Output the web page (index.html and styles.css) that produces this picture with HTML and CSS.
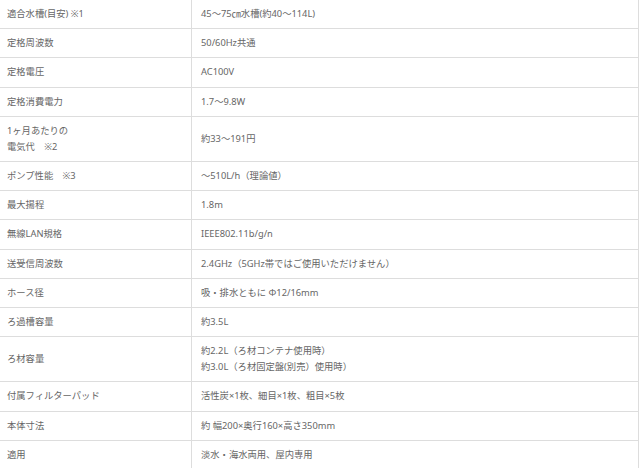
FILE: index.html
```html
<!DOCTYPE html>
<html lang="ja">
<head>
<meta charset="utf-8">
<link rel="stylesheet" href="styles.css">
</head>
<body>
<table class="spec">
<tbody>
<tr><th>適合水槽(目安) ※1</th><td>45～75㎝水槽(約40～114L)</td></tr>
<tr><th>定格周波数</th><td>50/60Hz共通</td></tr>
<tr><th>定格電圧</th><td>AC100V</td></tr>
<tr><th>定格消費電力</th><td>1.7～9.8W</td></tr>
<tr><th>1ヶ月あたりの<br>電気代　※2</th><td>約33～191円</td></tr>
<tr><th>ポンプ性能　※3</th><td>～510L/h（理論値）</td></tr>
<tr><th>最大揚程</th><td>1.8m</td></tr>
<tr><th>無線LAN規格</th><td>IEEE802.11b/g/n</td></tr>
<tr><th>送受信周波数</th><td>2.4GHz（5GHz帯ではご使用いただけません）</td></tr>
<tr><th>ホース径</th><td>吸・排水ともに Φ12/16mm</td></tr>
<tr><th>ろ過槽容量</th><td>約3.5L</td></tr>
<tr><th>ろ材容量</th><td>約2.2L（ろ材コンテナ使用時）<br>約3.0L（ろ材固定盤(別売）使用時）</td></tr>
<tr><th>付属フィルターパッド</th><td>活性炭×1枚、細目×1枚、粗目×5枚</td></tr>
<tr><th>本体寸法</th><td>約 幅200×奥行160×高さ350mm</td></tr>
<tr><th>適用</th><td>淡水・海水両用、屋内専用</td></tr>
</tbody>
</table>
</body>
</html>
```

FILE: styles.css
```css
html, body {
  margin: 0;
  padding: 0;
  background: #fff;
}
.spec {
  border-collapse: collapse;
  width: 639px;
  margin-top: -1px;
  font-family: "Noto Sans", "Noto Sans CJK JP", sans-serif;
  font-size: 9.3px;
  line-height: 16.1px;
  color: #666;
  border-right: 1px solid #ddd;
}
.spec th,
.spec td {
  border-top: 1px solid #ddd;
  border-bottom: 1px solid #ddd;
  padding: 6.05px 0;
  text-align: left;
  font-weight: normal;
  vertical-align: middle;
}
.spec th {
  width: 184px;
  padding-left: 7px;
  border-right: 1px solid #ddd;
}
.spec td {
  padding-left: 9px;
}
```
